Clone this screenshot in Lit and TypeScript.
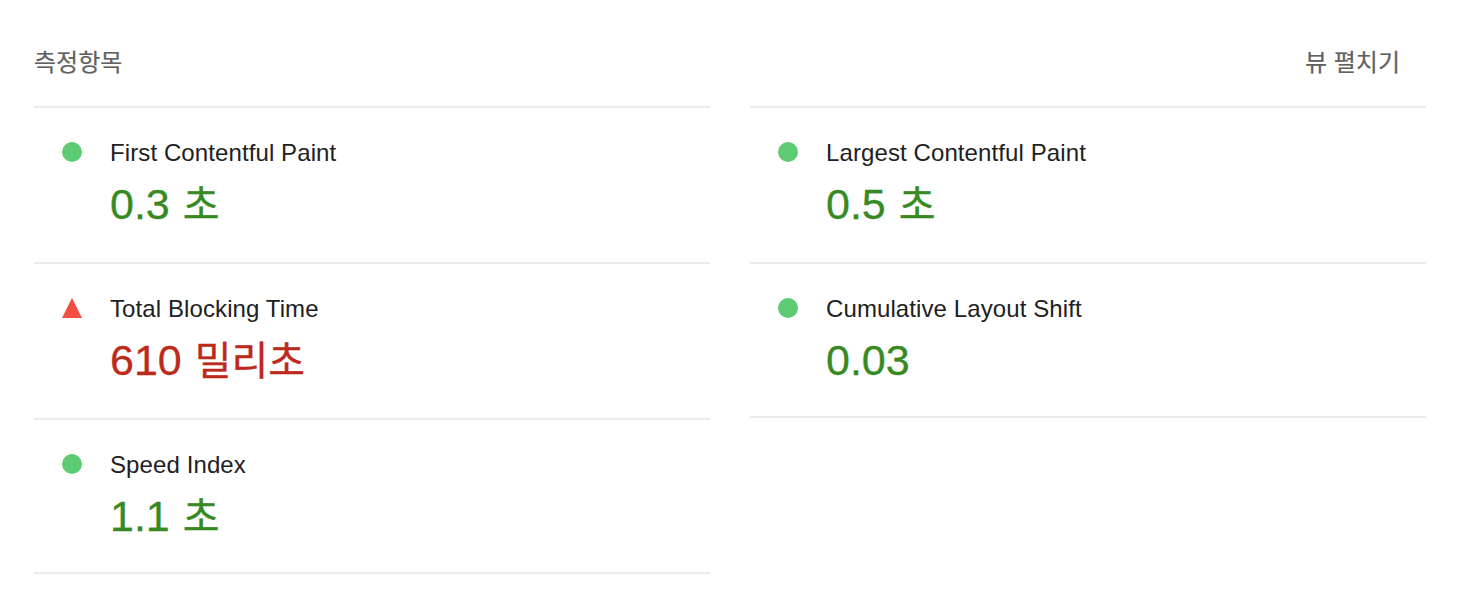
import { LitElement, html, css } from 'lit';
import { customElement } from 'lit/decorators.js';

type Metric = { label: string; value: string; unit?: string; status: 'pass' | 'fail'; tall?: boolean };

const LEFT: Metric[] = [
  { label: 'First Contentful Paint', value: '0.3', unit: '초', status: 'pass', tall: true },
  { label: 'Total Blocking Time', value: '610', unit: '밀리초', status: 'fail', tall: true },
  { label: 'Speed Index', value: '1.1', unit: '초', status: 'pass' },
];

const RIGHT: Metric[] = [
  { label: 'Largest Contentful Paint', value: '0.5', unit: '초', status: 'pass', tall: true },
  { label: 'Cumulative Layout Shift', value: '0.03', status: 'pass' },
];

@customElement('app-root')
export class AppRoot extends LitElement {
  static styles = css`
    :host {
      display: block;
      background: #fff;
      font-family: 'Liberation Sans', 'Noto Sans CJK KR', sans-serif;
    }

    .audits {
      padding: 44px 36px 0 34px;
    }

    .header {
      display: flex;
      justify-content: space-between;
      height: 62px;
      padding-right: 26px;
      font-size: 24px;
      line-height: 38px;
      color: #616161;
      -webkit-text-stroke: 0.2px;
    }

    .columns {
      display: grid;
      grid-template-columns: 1fr 1fr;
      column-gap: 40px;
    }

    .metric {
      display: flex;
      height: 152px;
      border-bottom: 2px solid #ebebeb;
    }

    .metric.first {
      border-top: 2px solid #ebebeb;
    }

    .metric.tall {
      height: 154px;
    }

    .icon {
      flex: none;
      width: 20px;
      height: 20px;
      margin: 34px 28px 0 28px;
    }

    .label {
      margin-top: 27px;
      font-size: 24px;
      line-height: 36px;
      letter-spacing: 0.1px;
      color: #212121;
    }

    .value {
      margin-top: 6px;
      font-size: 43px;
      line-height: 54px;
      -webkit-text-stroke: 0.3px;
    }

    .unit {
      font-size: 40px;
      margin-left: 1px;
    }

    .pass .value { color: #378a22; }
    .fail .value { color: #bc2a1c; }
  `;

  private renderIcon(status: Metric['status']) {
    return status === 'pass'
      ? html`<svg class="icon" viewBox="0 0 20 20"><circle cx="10" cy="10" r="10" fill="#5ccb74"></circle></svg>`
      : html`<svg class="icon" viewBox="0 0 20 20"><polygon points="10,0 20,20 0,20" fill="#f24e42"></polygon></svg>`;
  }

  private renderMetric(m: Metric, i: number) {
    return html`
      <div class="metric ${m.status} ${m.tall ? 'tall' : ''} ${i === 0 ? 'first' : ''}">
        ${this.renderIcon(m.status)}
        <div>
          <div class="label">${m.label}</div>
          <div class="value">${m.value}${m.unit ? html` <span class="unit">${m.unit}</span>` : ''}</div>
        </div>
      </div>
    `;
  }

  render() {
    return html`
      <div class="audits">
        <div class="header">
          <span>측정항목</span>
          <span>뷰 펼치기</span>
        </div>
        <div class="columns">
          <div>${LEFT.map((m, i) => this.renderMetric(m, i))}</div>
          <div>${RIGHT.map((m, i) => this.renderMetric(m, i))}</div>
        </div>
      </div>
    `;
  }
}
